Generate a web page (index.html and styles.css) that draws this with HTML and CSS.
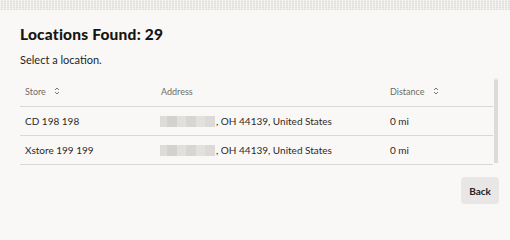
FILE: index.html
```html
<!DOCTYPE html>
<html>
<head>
<meta charset="utf-8">
<link rel="stylesheet" href="styles.css">
</head>
<body>
<div class="topband"></div>
<main class="panel">
  <h1 class="title">Locations Found: 29</h1>
  <p class="subtitle">Select a location.</p>
  <div class="tablewrap">
    <div class="table">
      <div class="row head">
        <div class="cell">Store <svg class="sort" viewBox="0 0 6 8" width="6" height="8"><path d="M1 3 L3 1 L5 3 M1 5 L3 7 L5 5" fill="none" stroke="#7a7773" stroke-width="1"/></svg></div>
        <div class="cell">Address</div>
        <div class="cell">Distance <svg class="sort" viewBox="0 0 6 8" width="6" height="8"><path d="M1 3 L3 1 L5 3 M1 5 L3 7 L5 5" fill="none" stroke="#7a7773" stroke-width="1"/></svg></div>
      </div>
      <div class="row">
        <div class="cell">CD 198 198</div>
        <div class="cell"><span class="blur"></span>, OH 44139, United States</div>
        <div class="cell">0 mi</div>
      </div>
      <div class="row">
        <div class="cell">Xstore 199 199</div>
        <div class="cell"><span class="blur"></span>, OH 44139, United States</div>
        <div class="cell">0 mi</div>
      </div>
    </div>
    <div class="scrollbar"><div class="thumb"></div></div>
  </div>
  <div class="actions">
    <button class="btn">Back</button>
  </div>
</main>
</body>
</html>
```
FILE: styles.css
```css
* { box-sizing: border-box; }
html, body { margin: 0; padding: 0; }
body {
  background: #f9f8f6;
  font-family: "Lato", "Noto Sans", sans-serif;
  color: #2b2a28;
  width: 510px;
  height: 216px;
  overflow: hidden;
}
.topband {
  height: 10px;
  background-color: #eeece9;
  background-image:
    repeating-linear-gradient(90deg, rgba(255,255,255,0.55) 0 1px, transparent 1px 3px),
    repeating-linear-gradient(0deg, rgba(210,207,203,0.45) 0 1px, transparent 1px 2px);
}
.panel {
  padding: 0 11px 0 20px;
}
.title {
  margin: 14px 0 0;
  font-size: 15.5px;
  font-weight: 900;
  line-height: 20px;
  color: #161513;
  letter-spacing: 0.2px;
}
.subtitle {
  margin: 8px 0 0;
  font-size: 11px;
  line-height: 16px;
  color: #1f1e1c;
}
.tablewrap {
  display: flex;
  margin-top: 8px;
  height: 89px;
}
.table {
  width: 473px;
}
.row {
  display: grid;
  grid-template-columns: 136px 229px 108px;
  height: 29px;
  align-items: center;
  border-bottom: 1px solid #dad8d5;
  font-size: 10px;
}
.row.head {
  height: 31px;
  font-size: 9px;
  color: #6f6c68;
}
.cell {
  padding-left: 5px;
  white-space: nowrap;
  display: flex;
  align-items: center;
}
.sort { margin-left: 8px; }
.blur {
  display: inline-block;
  width: 55px;
  height: 11px;
  margin-left: -1px;
  margin-right: 1px;
  background: linear-gradient(90deg, #dedcda 0 12%, #d4d2cf 12% 30%, #e2e0dd 30% 48%, #d8d6d3 48% 66%, #e3e1de 66% 82%, #dcdad7 82% 100%);
}
.scrollbar {
  width: 5px;
  margin-left: 1px;
  padding-top: 2px;
}
.thumb {
  width: 4px;
  height: 85px;
  background: #dcdbd9;
  border-top: 2px solid #eceae8;
}
.actions {
  display: flex;
  justify-content: flex-end;
  margin-top: 12px;
}
.btn {
  width: 38px;
  height: 27px;
  border: none;
  border-radius: 4px;
  background: #e8e7e5;
  font-family: "Lato", sans-serif;
  font-size: 10px;
  font-weight: 700;
  color: #222;
  padding: 0;
}
```
